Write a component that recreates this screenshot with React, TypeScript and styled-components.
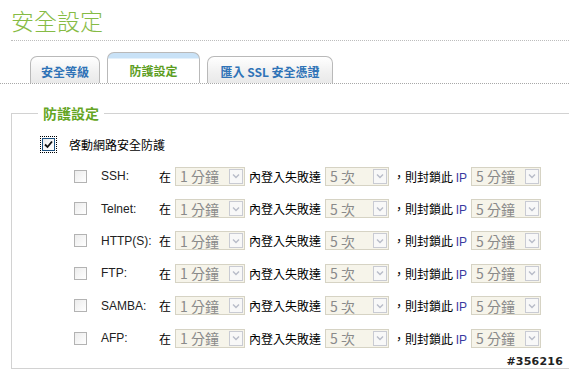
import React from "react";
import styled, { createGlobalStyle } from "styled-components";

const Global = createGlobalStyle`
  html, body { margin: 0; padding: 0; background: #fff; }
  body { width: 569px; height: 374px; overflow: hidden; font-family: "Liberation Sans", "Noto Sans CJK TC", sans-serif; font-size: 12px; color: #000; }
`;

const Page = styled.div`
  position: relative;
  width: 569px;
  height: 374px;
  overflow: hidden;
`;

const Title = styled.h1`
  margin: 0 0 0 11px;
  padding-top: 6px;
  height: 34px;
  font-family: "Noto Sans CJK TC", sans-serif;
  font-weight: 300;
  font-size: 23px;
  line-height: 28px;
  color: #86bb45;
  border-bottom: 1px dotted #bdbdbd;
`;

const TabBar = styled.div`
  display: flex;
  align-items: flex-end;
  gap: 7px;
  height: 42px;
  padding-left: 30px;
  border-bottom: 1px dotted #a8a8a8;
`;

const Tab = styled.div<{ $active?: boolean; $w: number }>`
  width: ${(p) => p.$w}px;
  height: ${(p) => (p.$active ? 31 : 27)}px;
  box-sizing: border-box;
  border: 1px solid #b9b9b9;
  border-bottom: none;
  border-radius: 7px 7px 0 0;
  display: flex;
  align-items: center;
  justify-content: center;
  padding-top: ${(p) => (p.$active ? 4 : 2)}px;
  font-family: "Noto Sans CJK TC", sans-serif;
  font-weight: 700;
  font-size: 12px;
  color: ${(p) => (p.$active ? "#5c9d1e" : "#2f73b7")};
  background: ${(p) =>
    p.$active
      ? "linear-gradient(#c9e2f7 0, #c9e2f7 5px, #ffffff 6px)"
      : "linear-gradient(#ffffff, #f0f0f0 60%, #e9e9e9)"};
`;

const Fieldset = styled.fieldset`
  margin: 21px -10px 0 11px;
  padding: 12px 0 0 0;
  height: 264px;
  box-sizing: border-box;
  border: 1px solid #d2d2d2;
`;

const Legend = styled.legend`
  margin-left: 26px;
  padding: 0 5px;
  font-family: "Noto Sans CJK TC", sans-serif;
  font-weight: 700;
  font-size: 14px;
  line-height: 16px;
  color: #64a523;
`;

const Box = styled.span<{ $checked?: boolean }>`
  display: inline-flex;
  align-items: center;
  justify-content: center;
  width: 13px;
  height: 13px;
  box-sizing: border-box;
  border: 1px solid ${(p) => (p.$checked ? "#1c5180" : "#b3b3b3")};
  background: linear-gradient(135deg, #ececec, #ffffff);
  flex: none;
`;

const FocusRing = styled.span`
  display: inline-flex;
  padding: 2px;
  outline: 1px dotted #000;
  outline-offset: -1px;
`;

const MainRow = styled.div`
  display: flex;
  align-items: center;
  gap: 12px;
  padding-left: 28px;
  height: 24px;
  margin-top: -1px;
  font-family: "Noto Sans CJK TC", sans-serif;
  font-size: 12px;
`;

const Rows = styled.div`
  display: flex;
  flex-direction: column;
  margin-top: 4px;
`;

const Row = styled.div`
  display: flex;
  align-items: center;
  height: 32.4px;
  padding-left: 62px;
  font-family: "Noto Sans CJK TC", sans-serif;
  font-size: 12px;
`;

const Service = styled.span`
  width: 58px;
  margin-left: 14px;
  font-family: "Liberation Sans", sans-serif;
  font-size: 12px;
  color: #222;
`;

const Word = styled.span`
  margin-right: 4px;
  white-space: nowrap;
`;

const Ip = styled.span`
  font-family: "Liberation Sans", sans-serif;
  color: #3a3aa0;
`;

const Select = styled.div<{ $w: number }>`
  display: flex;
  align-items: center;
  justify-content: space-between;
  width: ${(p) => p.$w}px;
  height: 19px;
  box-sizing: border-box;
  border: 1px solid #d6d3c4;
  background: #f6f4ea;
  padding: 0 1px 0 4px;
  margin-right: 4px;
  font-family: "Noto Sans CJK TC", sans-serif;
  font-size: 14px;
  color: #8a8a8a;
`;

const Arrow = styled.span`
  display: flex;
  align-items: center;
  justify-content: center;
  width: 14px;
  height: 15px;
  box-sizing: border-box;
  border: 1px solid #c9cbd3;
  background: #f8f8f8;
`;

const Stamp = styled.div`
  position: absolute;
  right: 6px;
  bottom: 6px;
  font-family: "DejaVu Sans", sans-serif;
  font-weight: 700;
  font-size: 11px;
  color: #222;
  text-shadow: 1px 0 #fff, -1px 0 #fff, 0 1px #fff, 0 -1px #fff;
  letter-spacing: 0.2px;
`;

const Chevron = () => (
  <svg width="8" height="6" viewBox="0 0 8 6">
    <path d="M1 1.5 L4 4.5 L7 1.5" fill="none" stroke="#b8bcc8" strokeWidth="1.4" />
  </svg>
);

const Check = () => (
  <svg width="9" height="9" viewBox="0 0 9 9">
    <path d="M1 4.5 L3.5 7 L8 1.5" fill="none" stroke="#111" strokeWidth="1.8" />
  </svg>
);

const Dropdown = ({ value, w }: { value: string; w: number }) => (
  <Select $w={w}>
    <span>{value}</span>
    <Arrow>
      <Chevron />
    </Arrow>
  </Select>
);

const services = ["SSH:", "Telnet:", "HTTP(S):", "FTP:", "SAMBA:", "AFP:"];

export default function App() {
  return (
    <>
      <Global />
      <Page>
        <Title>安全設定</Title>
        <TabBar>
          <Tab $w={70}>安全等級</Tab>
          <Tab $w={93} $active>
            防護設定
          </Tab>
          <Tab $w={126}>匯入 SSL 安全憑證</Tab>
        </TabBar>
        <Fieldset>
          <Legend>防護設定</Legend>
          <MainRow>
            <FocusRing>
              <Box $checked>
                <Check />
              </Box>
            </FocusRing>
            <span>啓動網路安全防護</span>
          </MainRow>
          <Rows>
            {services.map((s) => (
              <Row key={s}>
                <Box />
                <Service>{s}</Service>
                <Word>在</Word>
                <Dropdown value="1 分鐘" w={70} />
                <Word>內登入失敗達</Word>
                <Dropdown value="5 次" w={64} />
                <Word>
                  ，則封鎖此 <Ip>IP</Ip>
                </Word>
                <Dropdown value="5 分鐘" w={70} />
              </Row>
            ))}
          </Rows>
        </Fieldset>
        <Stamp>#356216</Stamp>
      </Page>
    </>
  );
}
